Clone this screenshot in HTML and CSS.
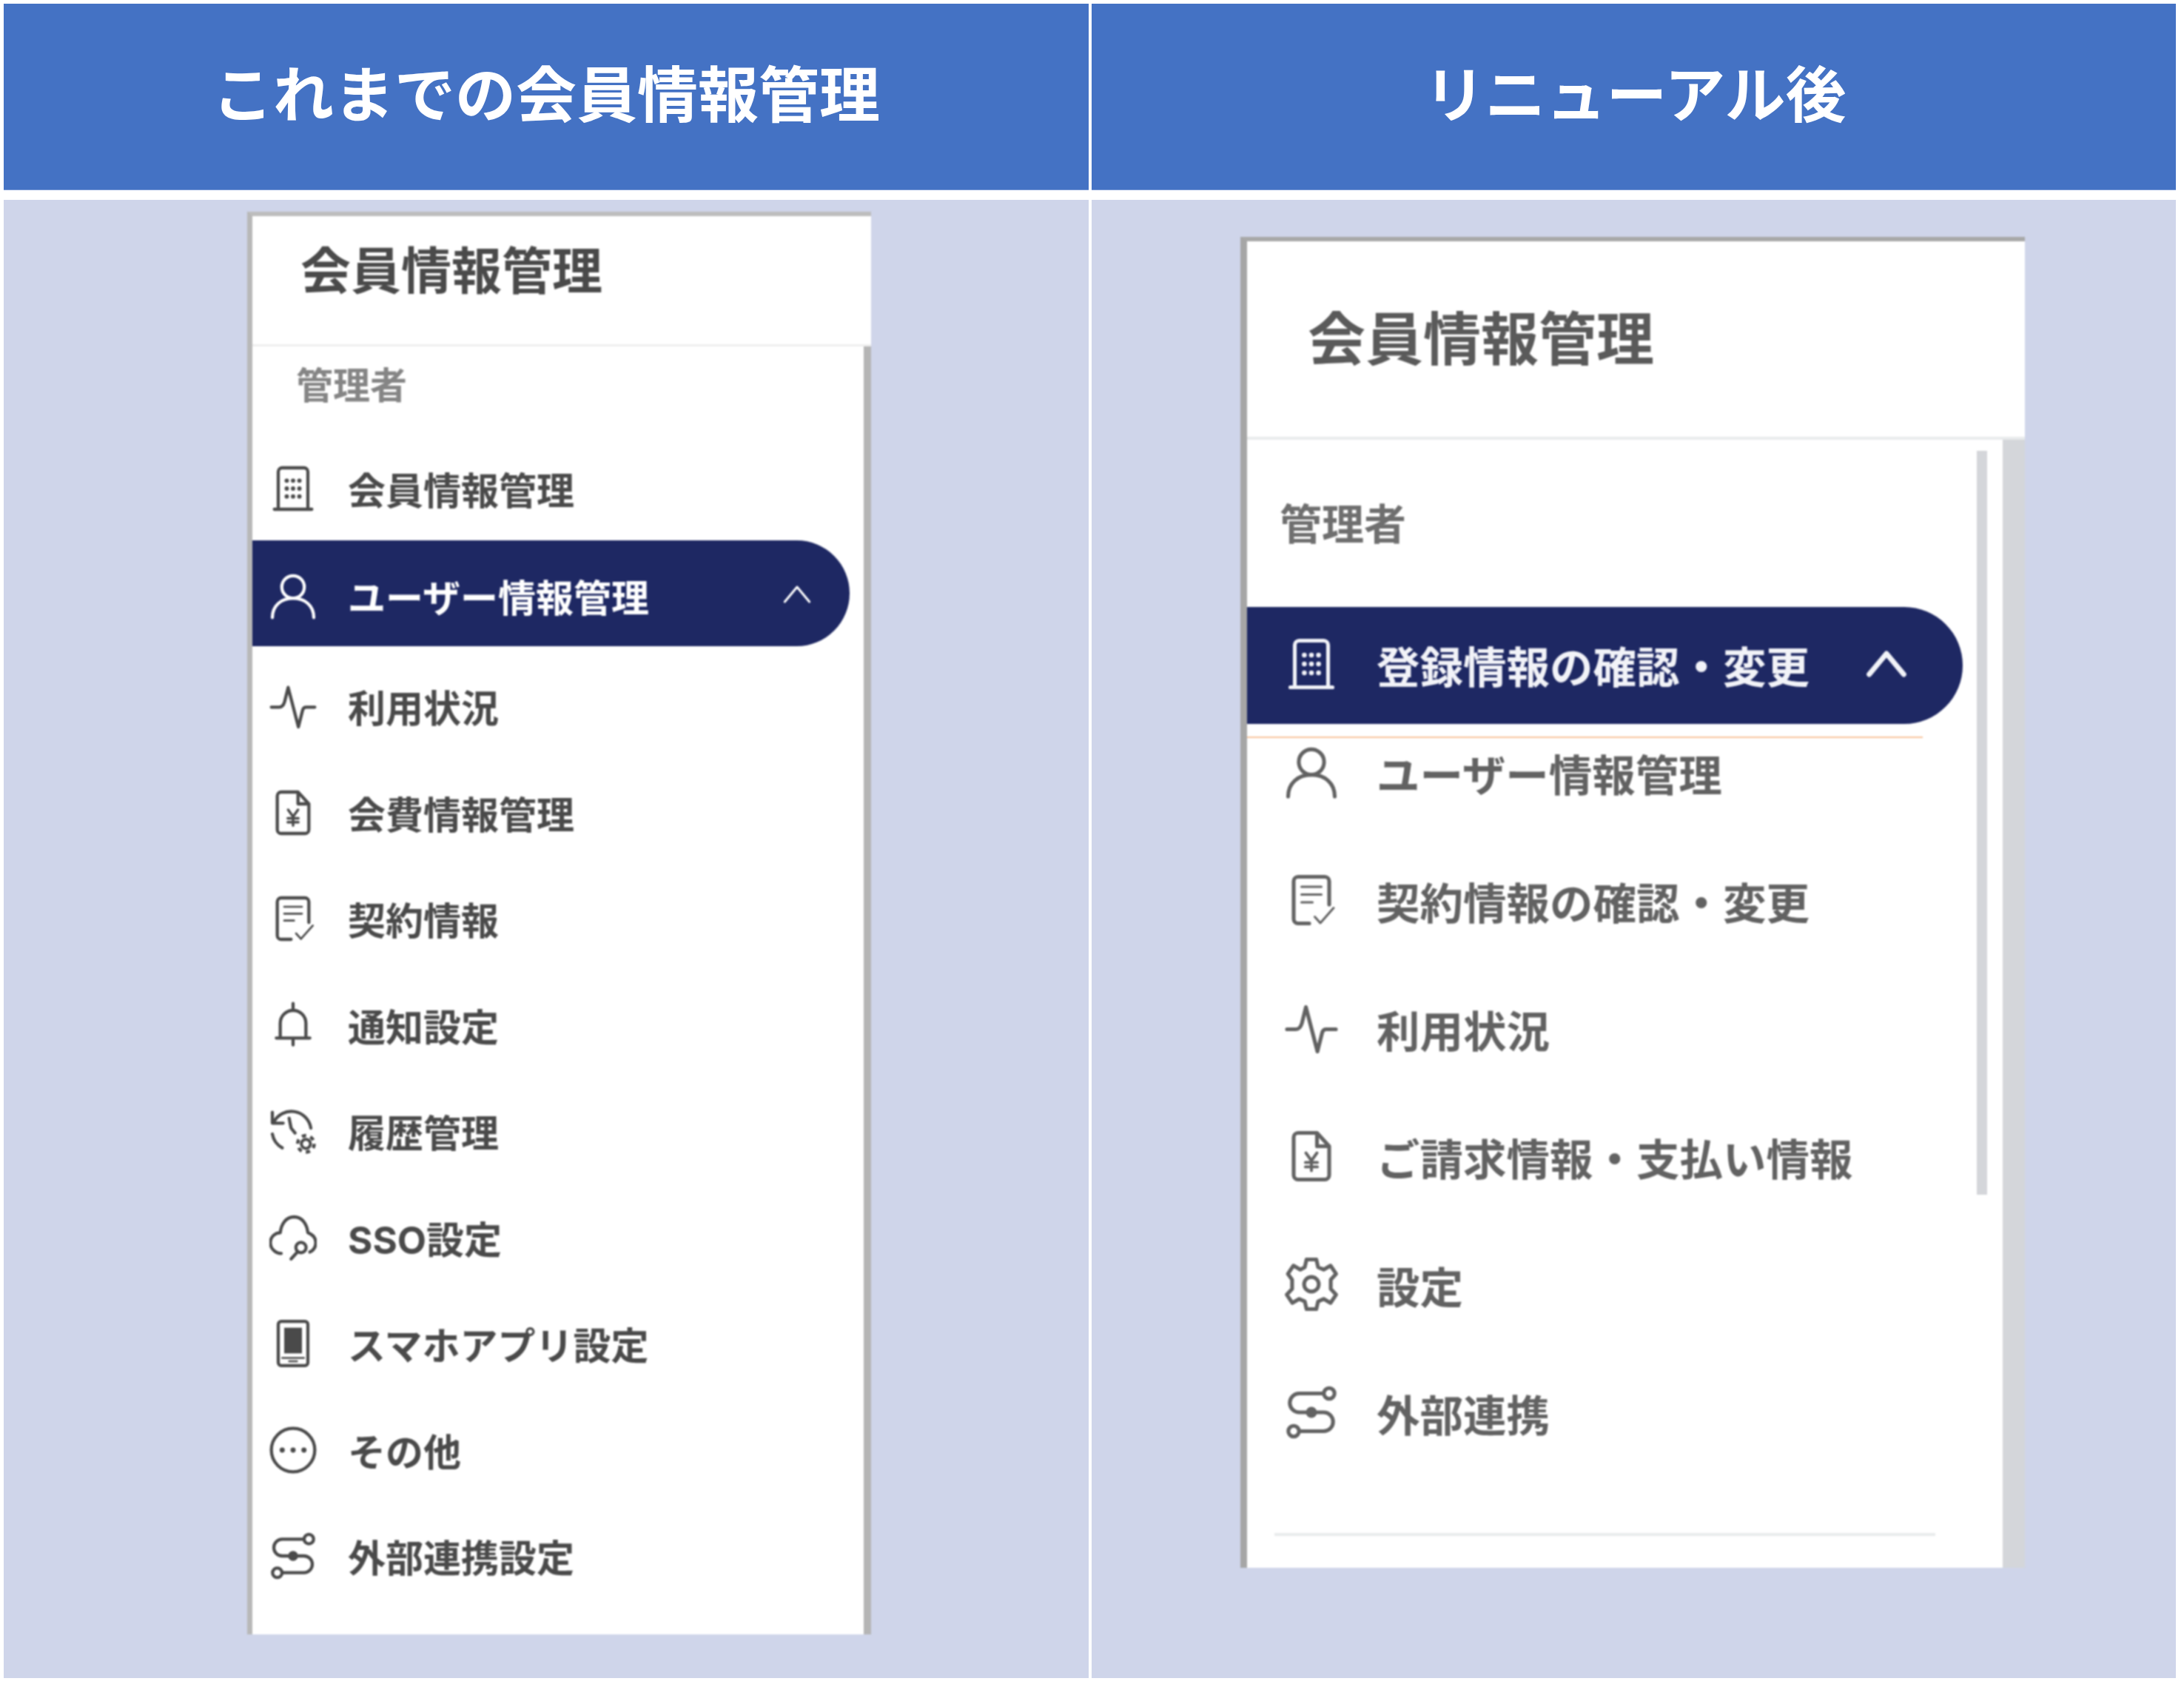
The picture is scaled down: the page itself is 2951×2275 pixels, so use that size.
FILE: index.html
```html
<!DOCTYPE html>
<html lang="ja">
<head>
<meta charset="utf-8">
<title>会員情報管理</title>
<link rel="stylesheet" href="styles.css">
</head>
<body>
<svg class="defs" aria-hidden="true">
  <symbol id="i-building" viewBox="0 0 24 24"><path d="M2.5 22.5H21.5M4.5 22.5V3.5a2 2 0 0 1 2-2H17.5a2 2 0 0 1 2 2V22.5"/><g class="fill"><circle cx="8.8" cy="8" r="1.1"/><circle cx="12" cy="8" r="1.1"/><circle cx="15.2" cy="8" r="1.1"/><circle cx="8.8" cy="12" r="1.1"/><circle cx="12" cy="12" r="1.1"/><circle cx="15.2" cy="12" r="1.1"/><circle cx="8.8" cy="16" r="1.1"/><circle cx="12" cy="16" r="1.1"/><circle cx="15.2" cy="16" r="1.1"/></g></symbol>
  <symbol id="i-user" viewBox="0 0 24 24"><circle cx="12" cy="7.5" r="5.7"/><path d="M1.5 23c0-6 4.5-9.800 10.500-9.800S22.500 17 22.500 23"/></symbol>
  <symbol id="i-pulse" viewBox="0 0 24 24"><path d="M1 12.500H5c1.500 0 2.200-1 2.700-2.700L9.500 2.500l5.200 20 2.200-8.700c.3-1 .9-1.300 1.800-1.300H23"/></symbol>
  <symbol id="i-yen" viewBox="0 0 24 24"><path d="M6 1.500H14.500L20 7.500V20.500a2 2 0 0 1-2 2H6a2 2 0 0 1-2-2V3.500a2 2 0 0 1 2-2ZM14.500 1.500V7.500H20"/><path class="mid" d="M9.500 10.500 12 14l2.500-3.500M12 14v4.500M9.300 14.800h5.400M9.300 16.800h5.400"/></symbol>
  <symbol id="i-contract" viewBox="0 0 24 24"><path d="M11 22.500H6a2 2 0 0 1-2-2V3.500a2 2 0 0 1 2-2H18a2 2 0 0 1 2 2V14"/><path class="thin" d="M7.500 6H16.500M7.500 9.500H16.500M7.500 13H12.500M13.500 19.500l2.500 2.800 6-6.800"/></symbol>
  <symbol id="i-bell" viewBox="0 0 24 24"><path d="M12 1v2.500M5.500 18.500V11a6.500 6.500 0 0 1 13 0v7.500M3.500 18.500H20.500M12 19.500V22"/></symbol>
  <symbol id="i-history" viewBox="0 0 24 24"><path d="M1.500 2.500V8H7M2.200 7.500A10 10 0 0 1 21 10.500M1.500 13.500A10 10 0 0 0 6.500 20.500M10 5.500 11 10.500l2 2.500"/><circle class="gear-ring" cx="18.500" cy="18.500" r="2.300"/><circle class="gear-teeth" cx="18.500" cy="18.500" r="4.200"/></symbol>
  <symbol id="i-cloud" viewBox="0 0 24 24"><path d="M6 20C3 20 .5 17.500.5 14.500S3 9.500 5.500 9.500C6 5 8.500 1.500 12.500 1.500S19 5 19.500 9.500C21.500 10.300 23.500 12 23.500 14.500c0 2-1 3.800-3 4.800"/><circle cx="16" cy="17" r="2.600"/><path d="M14 19.500 11 22.800"/></symbol>
  <symbol id="i-phone" viewBox="0 0 24 24"><rect x="4.500" y=".8" width="15" height="22.400" rx="1.500"/><rect class="solid" x="7.500" y="4" width="9" height="13"/><path class="thin" d="M6.500 19.300H17.500M10 21H14"/></symbol>
  <symbol id="i-more" viewBox="0 0 24 24"><circle cx="12" cy="12" r="11"/><g class="fill"><circle cx="6.500" cy="12" r="1.300"/><circle cx="12" cy="12" r="1.300"/><circle cx="17.500" cy="12" r="1.300"/></g></symbol>
  <symbol id="i-link" viewBox="0 0 24 24"><circle cx="20" cy="3.500" r="2.400"/><circle cx="4" cy="20.500" r="2.400"/><path d="M17.500 3.500H6.500a4.200 4.200 0 0 0 0 8.500H17.500a4.200 4.200 0 0 1 0 8.500H6.500"/><circle class="fill" cx="12" cy="12" r="2.500"/></symbol>
  <symbol id="i-gear" viewBox="0 0 24 24"><circle cx="12" cy="12" r="3.300"/><path d="M9.800.8h4.400l.8 3.500 2.500 1.100 3.100-1.800 2.500 3.700-2.400 2.600v4.200l2.400 2.600-2.500 3.700-3.100-1.800-2.500 1.100-.8 3.500H9.800L9 19.700l-2.500-1.100-3.100 1.800-2.500-3.700 2.400-2.600V9.900L1.400 7.300l2.500-3.700 3.100 1.800L9 4.300Z"/></symbol>
  <symbol id="i-chevron" viewBox="0 0 24 24"><path d="M2 18 12 6l10 12"/></symbol>
</svg>

<main class="sheet">
  <h2 class="head head-old">これまでの会員情報管理</h2>
  <h2 class="head head-new">リニューアル後</h2>

  <section class="cell cell-old">
    <div class="panel old">
      <header class="panel-title">会員情報管理</header>
      <div class="panel-body">
        <p class="role">管理者</p>
        <a class="row"><svg class="icon"><use href="#i-building"/></svg><span>会員情報管理</span></a>
        <a class="row active"><svg class="icon"><use href="#i-user"/></svg><span>ユーザー情報管理</span><svg class="chevron"><use href="#i-chevron"/></svg></a>
        <a class="row"><svg class="icon"><use href="#i-pulse"/></svg><span>利用状況</span></a>
        <a class="row"><svg class="icon"><use href="#i-yen"/></svg><span>会費情報管理</span></a>
        <a class="row"><svg class="icon"><use href="#i-contract"/></svg><span>契約情報</span></a>
        <a class="row"><svg class="icon"><use href="#i-bell"/></svg><span>通知設定</span></a>
        <a class="row"><svg class="icon"><use href="#i-history"/></svg><span>履歴管理</span></a>
        <a class="row"><svg class="icon"><use href="#i-cloud"/></svg><span>SSO設定</span></a>
        <a class="row"><svg class="icon"><use href="#i-phone"/></svg><span>スマホアプリ設定</span></a>
        <a class="row"><svg class="icon"><use href="#i-more"/></svg><span>その他</span></a>
        <a class="row"><svg class="icon"><use href="#i-link"/></svg><span>外部連携設定</span></a>
      </div>
    </div>
  </section>

  <section class="cell cell-new">
    <div class="panel new">
      <header class="panel-title">会員情報管理</header>
      <div class="panel-body">
        <div class="scroll-area">
          <span class="thumb"></span>
          <p class="role">管理者</p>
          <a class="row active"><svg class="icon"><use href="#i-building"/></svg><span>登録情報の確認・変更</span><svg class="chevron"><use href="#i-chevron"/></svg></a>
          <hr class="accent">
          <div class="rows">
            <a class="row"><svg class="icon"><use href="#i-user"/></svg><span>ユーザー情報管理</span></a>
            <a class="row"><svg class="icon"><use href="#i-contract"/></svg><span>契約情報の確認・変更</span></a>
            <a class="row"><svg class="icon"><use href="#i-pulse"/></svg><span>利用状況</span></a>
            <a class="row"><svg class="icon"><use href="#i-yen"/></svg><span>ご請求情報・支払い情報</span></a>
            <a class="row"><svg class="icon"><use href="#i-gear"/></svg><span>設定</span></a>
            <a class="row"><svg class="icon"><use href="#i-link"/></svg><span>外部連携</span></a>
          </div>
          <hr class="divider">
        </div>
      </div>
    </div>
  </section>
</main>
</body>
</html>
```

FILE: styles.css
```css
* { box-sizing: border-box; }

html, body { margin: 0; background: #fff; }

body {
  width: 2951px;
  height: 2275px;
  padding: 5px 11px 9px 5px;
  font-family: "Noto Sans CJK JP", "Noto Sans", sans-serif;
  color: #4a4a4a;
}

.defs { display: none; }

.sheet {
  display: grid;
  grid-template-columns: 1466px 1465px;
  grid-template-rows: 252px 1997px;
  column-gap: 4px;
  row-gap: 13px;
}

.head {
  margin: 0;
  display: flex;
  align-items: center;
  justify-content: center;
  background: #4472c4;
  border-bottom: 1px solid #7a9ad6;
  color: #fff;
  font-size: 82px;
  font-weight: 700;
  line-height: 1;
  padding-bottom: 16px;
}

.head-new { padding-left: 4px; }

.cell { background: #cfd5ea; }

.cell-old { padding: 16px 0 0 329px; }
.cell-new { padding: 50px 0 0 201px; }

.panel { background: #fff; filter: blur(1.2px); }

.panel-title, .role, .row span { font-weight: 700; }

.row { display: flex; align-items: center; }

.icon, .chevron {
  flex: none;
  fill: none;
  stroke: currentColor;
  stroke-linecap: round;
  stroke-linejoin: round;
}

.fill, .solid { fill: currentColor; stroke: none; }
.thin { stroke-width: 1; }
.mid { stroke-width: 1.3; }
.gear-ring { stroke-width: 1.5; }
.gear-teeth { stroke-width: 1.7; stroke-dasharray: 2.2 2.2; stroke-linecap: butt; }

.active { background: #1e2863; color: #fff; }

.chevron { margin-left: auto; }

/* previous design */
.old {
  width: 843px;
  height: 1922px;
  border-left: 7px solid #b8b8b8;
  border-top: 6px solid #bdbdbd;
}

.old .panel-title {
  height: 176px;
  padding: 37px 0 0 65px;
  font-size: 68px;
  line-height: 66px;
  border-bottom: 3px solid #efefef;
}

.old .panel-body {
  width: 836px;
  height: 1740px;
  border-right: 10px solid #b5b5b5;
  padding-right: 19px;
}

.old .role {
  margin: 0 0 20px;
  height: 100px;
  padding-left: 59px;
  font-size: 50px;
  line-height: 98px;
  color: #858585;
}

.old .row {
  height: 143.5px;
  padding-left: 23px;
  font-family: Inter, "Noto Sans CJK JP", sans-serif;
  font-size: 51px;
}

.old .row.active {
  height: 143px;
  margin: -2px 0 10px;
  padding: 7px 51px 0 23px;
  border-radius: 0 72px 72px 0;
}

.old .icon { width: 64px; height: 64px; margin-right: 42px; stroke-width: 1.6; }
.old .chevron { width: 40px; height: 40px; margin-top: -4px; stroke-width: 1.8; }

/* renewed design */
.new {
  width: 1060px;
  height: 1798px;
  border-left: 9px solid #a6a6a6;
  border-top: 6px solid #a8a8a8;
}

.new .panel-title {
  height: 268px;
  padding: 88px 0 0 82px;
  font-size: 78px;
  line-height: 78px;
  border-bottom: 4px solid #e9ebec;
  color: #5a5a5a;
}

.new .panel-body {
  height: 1524px;
  border-right: 30px solid #d4d6da;
}

.scroll-area { position: relative; height: 100%; padding-top: 81px; }

.thumb {
  position: absolute;
  top: 15px;
  right: 21px;
  width: 14px;
  height: 1005px;
  background: #d4d6da;
}

.new .role {
  margin: 0 0 89px 44px;
  height: 56px;
  font-size: 57px;
  line-height: 58px;
  color: #6f6f6f;
}

.new .row {
  height: 92px;
  padding-left: 51px;
  font-size: 58.5px;
  color: #626262;
}

.new .row.active {
  width: 967px;
  height: 158px;
  padding: 0 75px 4px 51px;
  border-radius: 0 79px 79px 0;
  color: #f2f3f8;
}

.new .icon { width: 72px; height: 72px; margin-right: 52px; stroke-width: 1.7; }
.new .chevron { width: 56px; height: 56px; stroke-width: 3; }

.accent {
  margin: 17px 0 0;
  width: 913px;
  height: 2px;
  border: 0;
  background: #f8c39a;
}

.rows { display: flex; flex-direction: column; gap: 81px; }

.divider {
  margin: 117px 0 0 37px;
  width: 893px;
  height: 4px;
  border: 0;
  background: #e9ebec;
}
```
